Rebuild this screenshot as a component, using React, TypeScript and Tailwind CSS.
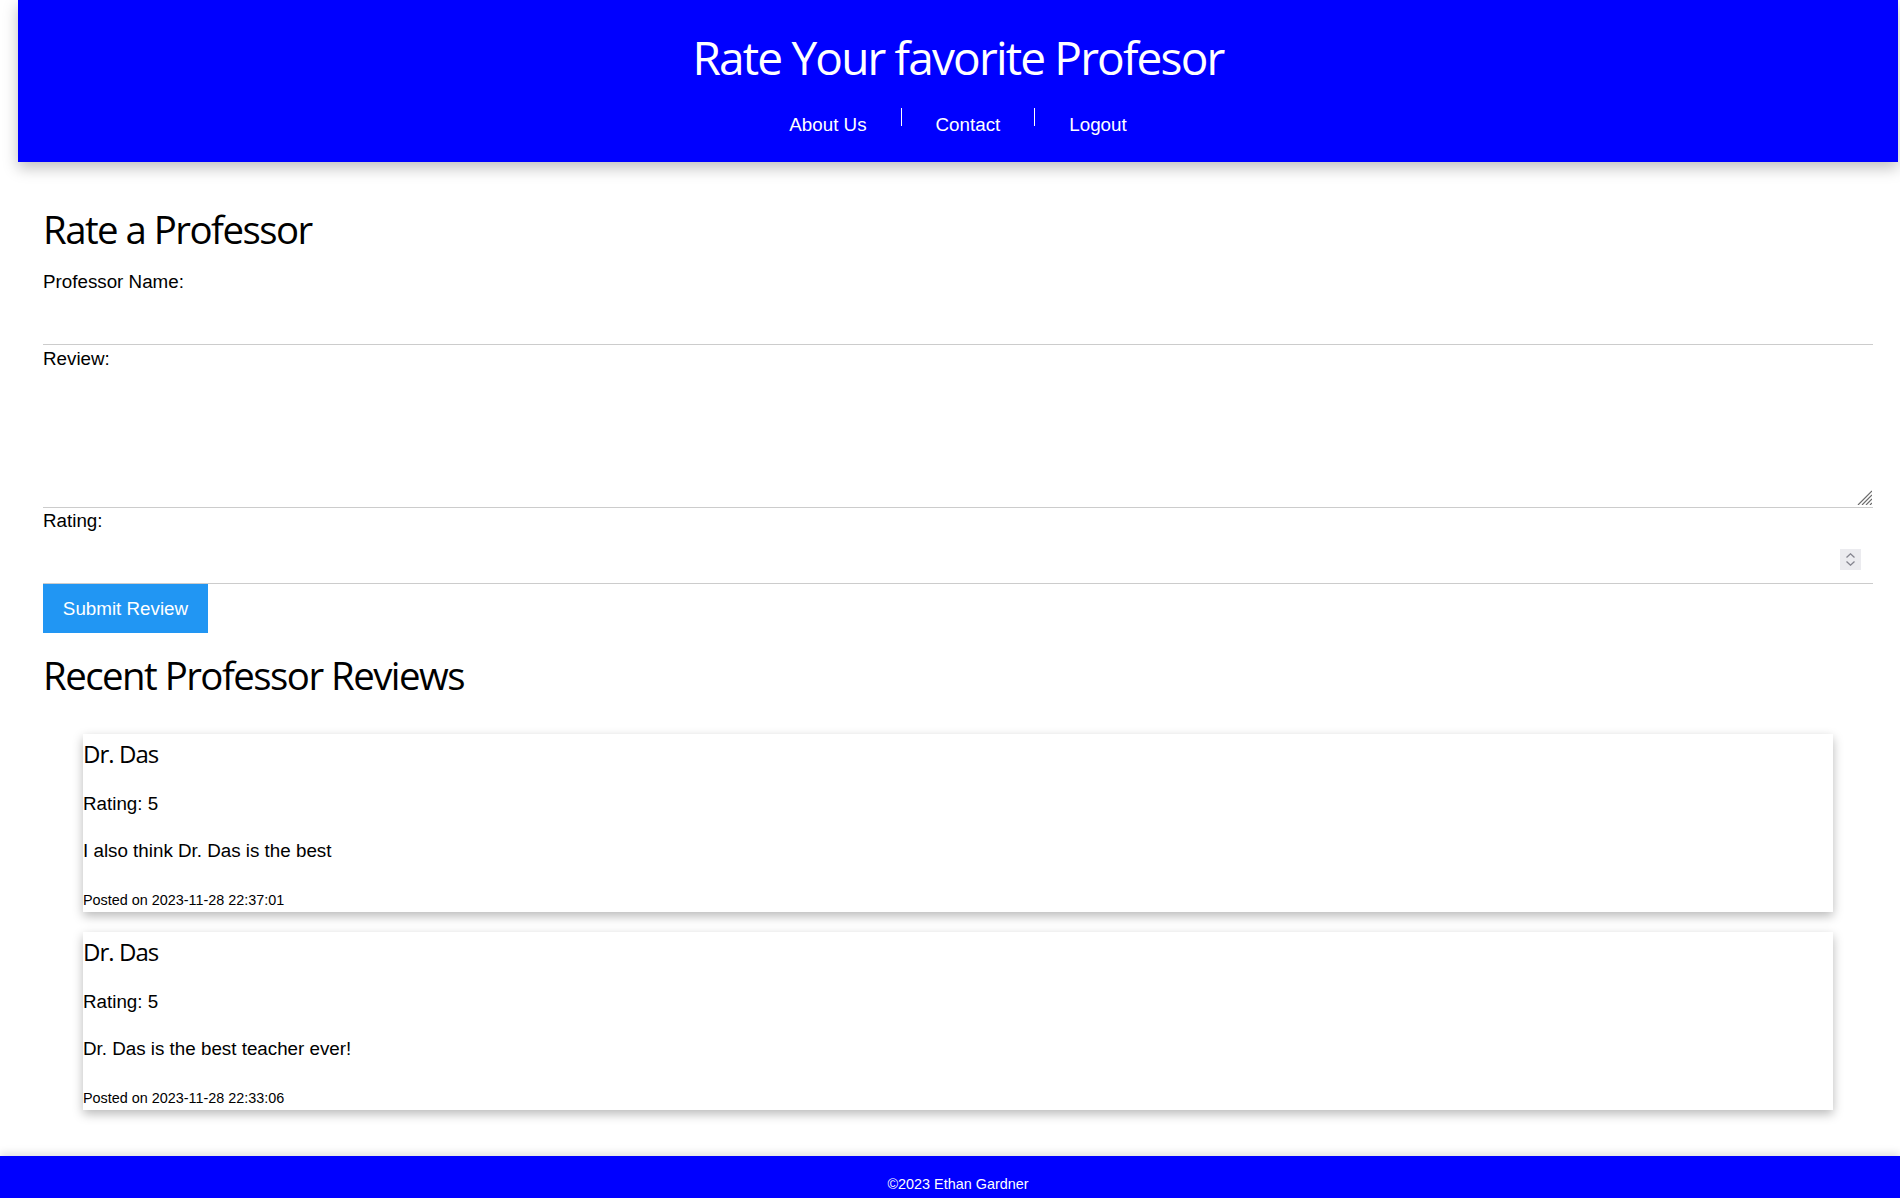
import { useState } from "react"

const reviews = [
  { id: 1, professor: "Dr. Das", rating: 5, text: "I also think Dr. Das is the best", posted: "2023-11-28 22:37:01" },
  { id: 2, professor: "Dr. Das", rating: 5, text: "Dr. Das is the best teacher ever!", posted: "2023-11-28 22:33:06" },
]

const heading = "font-['Open_Sans','Noto_Sans',sans-serif] tracking-[-0.04em]"
const body = "font-['Liberation_Sans',Arial,sans-serif]"

export default function App() {
  const [name, setName] = useState("")
  const [review, setReview] = useState("")
  const [rating, setRating] = useState("")

  return (
    <div className={`min-h-screen bg-white text-black ${body}`}>
      {/* Cabecera */}
      <header className="ml-[18px] w-[1880px] h-[162px] bg-[#0000ff] text-white shadow-[0_6px_14px_rgba(0,0,0,0.25)] pt-[34px]">
        <h1 className={`${heading} text-[46px] leading-[46px] h-[46px] text-center font-normal`}>
          Rate Your favorite Profesor
        </h1>
        <nav className="mt-[35px] flex justify-center gap-[34px] text-[18.8px] leading-[20px]">
          <a href="#">About Us</a>
          <span className="w-px h-[18px] -mt-[7px] bg-white" />
          <a href="#">Contact</a>
          <span className="w-px h-[18px] -mt-[7px] bg-white" />
          <a href="#">Logout</a>
        </nav>
      </header>

      <main className="pl-[43px] pr-[27px]">
        <h2 className={`${heading} mt-[48px] text-[38.4px] leading-[38px] h-[38px] font-normal`}>Rate a Professor</h2>

        <form className="mt-[24px] text-[18.8px]" onSubmit={(e) => e.preventDefault()}>
          <label className="block h-[20px] leading-[20px]">Professor Name:</label>
          <input
            type="text"
            value={name}
            onChange={(e) => setName(e.target.value)}
            className="block w-full h-[53px] px-[12px] border-b border-[#cccccc] outline-none"
          />

          <label className="block mt-[4px] h-[20px] leading-[20px]">Review:</label>
          <div className="relative">
            <textarea
              value={review}
              onChange={(e) => setReview(e.target.value)}
              className="block w-full h-[139px] px-[12px] border-b border-[#cccccc] outline-none resize-none"
            />
            <svg
              className="absolute right-[1px] bottom-[3px]"
              width="18"
              height="18"
              viewBox="0 0 18 18"
              stroke="#6b6b6b"
              strokeWidth="1.2"
            >
              <path d="M4 18 L18 4" />
              <path d="M8 18 L18 8" />
              <path d="M12 18 L18 12" />
              <path d="M16 18 L18 16" />
            </svg>
          </div>

          <label className="block mt-[3px] h-[20px] leading-[20px]">Rating:</label>
          <div className="relative">
            <input
              type="number"
              min={1}
              max={5}
              value={rating}
              onChange={(e) => setRating(e.target.value)}
              className="block w-full h-[53px] px-[12px] border-b border-[#cccccc] outline-none [appearance:textfield] [&::-webkit-inner-spin-button]:appearance-none [&::-webkit-outer-spin-button]:appearance-none"
            />
            <span className="absolute right-[12px] top-[18px] w-[21px] h-[21px] bg-[#ebebef] flex flex-col items-center justify-center gap-[3px]">
              <svg width="9" height="5" viewBox="0 0 9 5" fill="none" stroke="#85858f" strokeWidth="1.3">
                <path d="M0.5 4.5 L4.5 0.8 L8.5 4.5" />
              </svg>
              <svg width="9" height="5" viewBox="0 0 9 5" fill="none" stroke="#85858f" strokeWidth="1.3">
                <path d="M0.5 0.5 L4.5 4.2 L8.5 0.5" />
              </svg>
            </span>
          </div>

          <button type="submit" className="block w-[165px] h-[49px] bg-[#2196f3] text-white text-center leading-[49px]">
            Submit Review
          </button>
        </form>

        <h2 className={`${heading} mt-[23px] text-[38.4px] leading-[38px] h-[38px] font-normal`}>
          Recent Professor Reviews
        </h2>

        {/* Lista de reseñas */}
        <div className="mt-[40px] mx-[40px] flex flex-col gap-[20px]">
          {reviews.map((r) => (
            <div key={r.id} className="bg-white shadow-[0_4px_10px_rgba(0,0,0,0.28)] pt-[8px] pb-[4px]">
              <h3 className={`${heading} text-[24px] leading-[24px] h-[24px] font-normal`}>{r.professor}</h3>
              <p className="mt-[28px] text-[18.8px] leading-[20px]">Rating: {r.rating}</p>
              <p className="mt-[27px] text-[18.8px] leading-[20px]">{r.text}</p>
              <p className="mt-[31px] text-[14.4px] leading-[16px]">Posted on {r.posted}</p>
            </div>
          ))}
        </div>
      </main>

      <footer className="mt-[46px] h-[42px] bg-[#0000ff] text-white text-center text-[14.4px] leading-[16px] pt-[20px] pl-[16px] shadow-[0_-3px_8px_rgba(0,0,0,0.12)]">
        ©2023 Ethan Gardner
      </footer>
    </div>
  )
}
